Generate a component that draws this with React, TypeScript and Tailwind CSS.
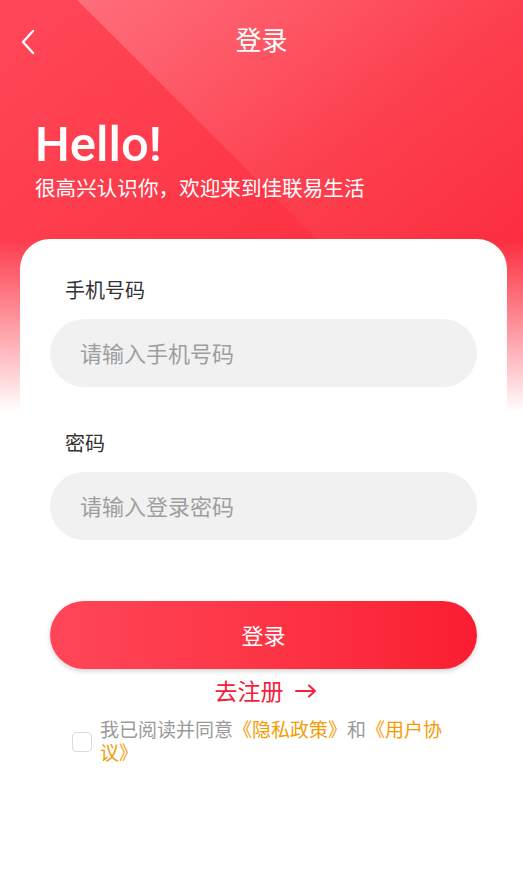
import React from 'react';

const font = { fontFamily: '"Noto Sans", "Noto Sans CJK SC", sans-serif' };

const Field: React.FC<{ label: string; placeholder: string; type?: string }> = ({ label, placeholder, type = 'text' }) => {
  return (
    <div className="flex flex-col">
      <label className="pl-[45px] text-[20px] leading-[28px] text-[#333333]">{label}</label>
      <input
        type={type}
        placeholder={placeholder}
        className="mx-[30px] mt-[14px] h-[68px] rounded-full bg-[#f1f1f1] px-[30px] text-[22px] text-[#333] outline-none placeholder:text-[#9e9e9e]"
      />
    </div>
  );
};

const App: React.FC = () => {
  return (
    <div className="relative w-[523px] h-[888px] overflow-hidden bg-white" style={font}>
      {/* header backdrop */}
      <div className="absolute inset-x-0 top-0 h-[412px] bg-gradient-to-br from-[#ff4758] to-[#fa1d31]" />
      <div
        className="absolute inset-x-0 top-0 h-[412px] bg-gradient-to-br from-white/25 via-white/5 to-transparent"
        style={{ clipPath: 'polygon(77px 0, 523px 0, 523px 412px, 490px 412px)' }}
      />
      <div className="absolute inset-x-0 top-[240px] h-[172px] bg-gradient-to-b from-transparent to-white" />

      <div className="relative flex flex-col">
        {/* nav bar */}
        <div className="relative flex h-[80px] items-center justify-center">
          <button className="absolute left-[16px] top-[26px] p-[2px]">
            <svg width="22" height="28" viewBox="0 0 22 28" fill="none" stroke="white" strokeWidth="2.4" strokeLinecap="round" strokeLinejoin="round">
              <path d="M15 3 L5 14 L15 25" />
            </svg>
          </button>
          <h1 className="text-[26px] text-white">登录</h1>
        </div>

        {/* greeting */}
        <div className="pl-[35px] pt-[36px]">
          <div className="text-[49px] font-medium leading-[58px] text-white" style={{ fontFamily: 'Roboto, "Noto Sans", sans-serif' }}>Hello!</div>
          <div className="mt-[0px] text-[20.6px] leading-[28px] text-white">很高兴认识你，欢迎来到佳联易生活</div>
        </div>

        {/* card */}
        <div className="ml-[20px] mt-[37px] w-[487px] rounded-[30px] bg-white pt-[38px] pb-[40px]">
          <Field label="手机号码" placeholder="请输入手机号码" />
          <div className="h-[43px]" />
          <Field label="密码" placeholder="请输入登录密码" type="password" />

          <button className="mx-[30px] mt-[61px] flex h-[68px] w-[427px] items-center justify-center rounded-full bg-gradient-to-r from-[#ff4658] to-[#fa1c31] text-[22px] text-white shadow-[0_2px_5px_rgba(0,0,0,0.18)]">
            登录
          </button>

          <div className="mt-[6px] flex items-center justify-center pl-[4px] text-[23px] leading-[32px] text-[#f5213a]">
            <span>去注册</span>
            <svg className="ml-[11px]" width="22" height="14" viewBox="0 0 22 14" fill="none" stroke="currentColor" strokeWidth="2" strokeLinecap="round" strokeLinejoin="round">
              <path d="M1 7 H20 M14 1.5 L20 7 L14 12.5" />
            </svg>
          </div>

          <div className="mt-[12px] flex items-center pl-[52px]">
            <span className="h-[20px] w-[20px] shrink-0 rounded-[4px] border border-[#dcdcdc] bg-white" />
            <p className="ml-[8px] w-[350px] text-[19px] leading-[23px] text-[#9a9a9a]">
              我已阅读并同意<span className="text-[#f59b00]">《隐私政策》</span>和<span className="text-[#f59b00]">《用户协议》</span>
            </p>
          </div>
        </div>
      </div>
    </div>
  );
};

export default App;
